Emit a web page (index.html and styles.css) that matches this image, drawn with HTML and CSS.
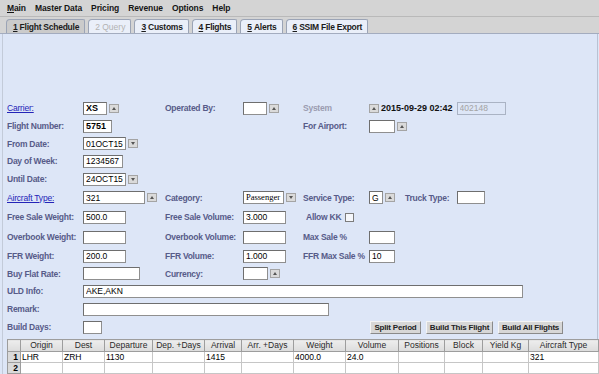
FILE: index.html
```html
<!DOCTYPE html>
<html lang="en">
<head>
<meta charset="UTF-8" />
<title>Flight Schedule</title>
<link rel="stylesheet" href="styles.css">
</head>
<body>

<div class="menubar">
  <span class="menu"><u>M</u>ain</span>
  <span class="menu">Master Data</span>
  <span class="menu">Pricing</span>
  <span class="menu">Revenue</span>
  <span class="menu">Options</span>
  <span class="menu">Help</span>
</div>

<div class="tabstrip">
  <span class="tab active"><u>1</u>&nbsp;Flight Schedule</span>
  <span class="tab disabled">2 Query</span>
  <span class="tab"><u>3</u>&nbsp;Customs</span>
  <span class="tab"><u>4</u>&nbsp;Flights</span>
  <span class="tab"><u>5</u>&nbsp;Alerts</span>
  <span class="tab"><u>6</u>&nbsp;SSIM File Export</span>
</div>

<div class="panel">
  <div class="form">
    <!-- row: carrier -->
    <a class="lbl link c1">Carrier:</a>
    <div class="fld"><input class="in strong w24" value="XS"><span class="arr"></span></div>
    <span class="lbl c3">Operated By:</span>
    <div class="fld"><input class="in w24"><span class="arr"></span></div>
    <span class="lbl muted c5">System</span>
    <div class="fld"><span class="arr"></span><span class="stamp">2015-09-29 02:42</span><input class="in off w49" value="402148" disabled></div>

    <!-- row: flight number -->
    <span class="lbl c1">Flight Number:</span>
    <div class="fld"><input class="in strong w29" value="5751"></div>
    <span class="lbl c5">For Airport:</span>
    <div class="fld"><input class="in w26"><span class="arr"></span></div>

    <span class="lbl c1">From Date:</span>
    <div class="fld"><input class="in w43" value="01OCT15"><span class="arr dn"></span></div>

    <span class="lbl c1">Day of Week:</span>
    <div class="fld"><input class="in w40" value="1234567"></div>

    <span class="lbl c1">Until Date:</span>
    <div class="fld"><input class="in w43" value="24OCT15"><span class="arr dn"></span></div>

    <!-- row: aircraft -->
    <a class="lbl link c1">Aircraft Type:</a>
    <div class="fld"><input class="in w62" value="321"><span class="arr"></span></div>
    <span class="lbl c3">Category:</span>
    <div class="fld"><span class="sel">Passenger</span><span class="arr dn"></span></div>
    <span class="lbl c5">Service Type:</span>
    <div class="fld"><input class="in w14" value="G"><span class="arr"></span><span class="lbl truck">Truck Type:</span><input class="in w28"></div>

    <span class="lbl c1">Free Sale Weight:</span>
    <div class="fld"><input class="in w43" value="500.0"></div>
    <span class="lbl c3">Free Sale Volume:</span>
    <div class="fld"><input class="in w43" value="3.000"></div>
    <div class="fld pair kk"><span class="lbl">Allow KK</span><span class="chk"></span></div>

    <span class="lbl c1">Overbook Weight:</span>
    <div class="fld"><input class="in w43"></div>
    <span class="lbl c3">Overbook Volume:</span>
    <div class="fld"><input class="in w43"></div>
    <span class="lbl c5">Max Sale %</span>
    <div class="fld"><input class="in w26"></div>

    <span class="lbl c1">FFR Weight:</span>
    <div class="fld"><input class="in w43" value="200.0"></div>
    <span class="lbl c3">FFR Volume:</span>
    <div class="fld"><input class="in w43" value="1.000"></div>
    <span class="lbl c5">FFR Max Sale %</span>
    <div class="fld"><input class="in w26" value="10"></div>

    <span class="lbl c1">Buy Flat Rate:</span>
    <div class="fld"><input class="in w57"></div>
    <span class="lbl c3">Currency:</span>
    <div class="fld"><input class="in w25"><span class="arr"></span></div>

    <span class="lbl c1">ULD Info:</span>
    <div class="fld wide"><input class="in w440" value="AKE,AKN"></div>

    <span class="lbl c1">Remark:</span>
    <div class="fld wide"><input class="in w246"></div>

    <span class="lbl c1">Build Days:</span>
    <div class="fld"><input class="in w19"></div>
    <div class="actions c6">
      <button class="btn split">Split Period</button>
      <button class="btn this">Build This Flight</button>
      <button class="btn all">Build All Flights</button>
    </div>
  </div>

  <table class="legs">
    <colgroup>
      <col class="k-rn"><col class="k-42"><col class="k-42"><col class="k-48"><col class="k-52">
      <col class="k-37"><col class="k-52"><col class="k-52"><col class="k-53"><col class="k-46">
      <col class="k-38"><col class="k-46"><col class="k-70">
    </colgroup>
    <thead>
      <tr>
        <th></th><th>Origin</th><th>Dest</th><th>Departure</th><th>Dep. +Days</th><th>Arrival</th><th>Arr. +Days</th>
        <th>Weight</th><th>Volume</th><th>Positions</th><th>Block</th><th>Yield Kg</th><th>Aircraft Type</th>
      </tr>
    </thead>
    <tbody>
      <tr>
        <td class="rn">1</td><td>LHR</td><td>ZRH</td><td>1130</td><td></td><td>1415</td><td></td>
        <td>4000.0</td><td>24.0</td><td></td><td></td><td></td><td>321</td>
      </tr>
      <tr>
        <td class="rn">2</td><td></td><td></td><td></td><td></td><td></td><td></td>
        <td></td><td></td><td></td><td></td><td></td><td></td>
      </tr>
    </tbody>
  </table>
</div>

</body>
</html>
```

FILE: styles.css
```css
html, body {
  margin: 0; padding: 0; height: 100%; overflow: hidden;
}
body {
  font-family: "Liberation Sans", Arial, sans-serif;
  font-size: 8.5px;
  background: #dde6f7;
  color: #000;
}

/* menu bar */
.menubar {
  height: 17px;
  box-sizing: border-box;
  background: #d4d4d4;
  border-bottom: 1px solid #b9b9b9;
  display: flex;
  align-items: center;
  gap: 9px;
  padding-left: 7px;
}
.menu {
  font-weight: bold;
  color: #151515;
  letter-spacing: -0.1px;
}

/* tabs */
.tabstrip {
  height: 17px;
  box-sizing: border-box;
  background: #d4d4d4;
  border-bottom: 1px solid #a3acbf;
  display: flex;
  align-items: flex-end;
  gap: 3px;
  padding-left: 6px;
}
.tab {
  height: 14px;
  box-sizing: border-box;
  display: flex;
  align-items: center;
  padding: 0 5px 0 6px;
  background: #eaeff9;
  border: 1px solid #9ba4b6;
  border-bottom: none;
  border-radius: 4px 2px 0 0;
  font-weight: bold;
  letter-spacing: -0.25px;
  color: #1c1c1c;
  white-space: nowrap;
}
.tab.active {
  background: #cbcbcb;
}
.tab.disabled {
  font-weight: normal;
  color: #b3b3b3;
  letter-spacing: 0;
}

/* main panel */
.panel {
  height: 100%;
  box-sizing: border-box;
  margin: 0 1px 0 2px;
  border-left: 1px solid #c3cbd9;
  border-right: 1px solid #b9c2d3;
  padding: 65px 0 0 4px;
}

.form {
  display: grid;
  grid-template-columns: 76px 82px 78px 60px 66px 1fr;
  grid-template-rows: 18px 18px 17px 18px 18px 19px 20px 20px 18px 17px 18px 18px 18px;
  align-items: center;
}
.c1 { grid-column: 1; }
.c3 { grid-column: 3; }
.c5 { grid-column: 5; }
.c6 { grid-column: 6; }
.wide { grid-column: 2 / -1; }
.pair { grid-column: 5 / -1; }

.lbl {
  font-weight: bold;
  color: #575b89;
  letter-spacing: -0.25px;
  white-space: nowrap;
}
.link {
  font-weight: normal;
  color: #2424b8;
  text-decoration: underline;
  letter-spacing: -0.2px;
  cursor: pointer;
}
.muted {
  color: #9b9cb0;
}

.fld {
  display: flex;
  align-items: center;
  gap: 2px;
}

.in {
  box-sizing: border-box;
  height: 13px;
  margin: 0;
  padding: 0 2px;
  border: 1px solid #8f8f8f;
  border-top-color: #6e6e6e;
  border-left-color: #6e6e6e;
  background: #fff;
  font: 8.5px "Liberation Sans", Arial, sans-serif;
  color: #000;
  outline: none;
}
.in.strong {
  font-weight: bold;
  font-size: 9px;
}
.in.off {
  background: transparent;
  border-color: #aab3c4;
  color: #a4a4a4;
  margin-left: 2px;
}
.w14 { width: 14px; }
.w19 { width: 19px; }
.w24 { width: 24px; }
.w25 { width: 25px; }
.w26 { width: 26px; }
.w28 { width: 28px; }
.w29 { width: 29px; }
.w40 { width: 40px; }
.w43 { width: 43px; }
.w49 { width: 49px; }
.w57 { width: 57px; }
.w62 { width: 62px; }
.w246 { width: 246px; }
.w440 { width: 440px; }

.arr {
  width: 10px;
  height: 9px;
  box-sizing: border-box;
  background: #dadada;
  border: 1px solid #a4a4a4;
  display: flex;
  align-items: center;
  justify-content: center;
}
.arr::after {
  content: "";
  border-left: 2.5px solid transparent;
  border-right: 2.5px solid transparent;
  border-bottom: 3px solid #555;
}
.arr.dn::after {
  border-bottom: 0;
  border-top: 3px solid #555;
}

.stamp {
  font-weight: bold;
  font-size: 9px;
  color: #111;
  white-space: nowrap;
}

.sel {
  box-sizing: border-box;
  width: 41px;
  height: 13px;
  padding: 0 2px;
  border: 1px solid #8f8f8f;
  border-top-color: #6e6e6e;
  border-left-color: #6e6e6e;
  background: #fff;
  font: 8.5px "Liberation Serif", "Times New Roman", serif;
  line-height: 11px;
  overflow: hidden;
  white-space: nowrap;
}

.truck {
  margin: 0 6px 0 8px;
}

.kk {
  padding-left: 3px;
  gap: 4px;
}
.chk {
  width: 7px;
  height: 7px;
  border: 1px solid #7c7c7c;
  background: #f5f7fb;
}

.actions {
  display: flex;
  gap: 5px;
  padding-left: 1px;
}
.btn {
  box-sizing: border-box;
  height: 13px;
  padding: 0;
  margin: 0;
  font: bold 8px "Liberation Sans", Arial, sans-serif;
  letter-spacing: -0.2px;
  color: #222;
  background: #d7d7d7;
  border: 1px solid;
  border-color: #f4f4f4 #8a8a8a #8a8a8a #f4f4f4;
  white-space: nowrap;
}
.btn.split { width: 51px; }
.btn.this { width: 67px; }
.btn.all { width: 65px; }

/* legs grid */
.legs {
  width: 591px;
  margin-top: 3px;
  border-collapse: collapse;
  table-layout: fixed;
  font-size: 8.5px;
}
.k-rn { width: 13px; }
.k-37 { width: 37px; }
.k-38 { width: 38px; }
.k-42 { width: 42px; }
.k-46 { width: 46px; }
.k-48 { width: 48px; }
.k-52 { width: 52px; }
.k-53 { width: 53px; }
.k-70 { width: 70px; }

.legs th {
  height: 11px;
  padding: 0;
  line-height: 11px;
  font-weight: normal;
  color: #2a2a2a;
  background: linear-gradient(#ededed, #dcdcdc);
  border: 1px solid #9d9d9d;
  text-align: center;
  white-space: nowrap;
  overflow: hidden;
}
.legs td {
  height: 10px;
  line-height: 10px;
  padding: 0 1px;
  background: #fff;
  border: 1px solid #c6c6c6;
  white-space: nowrap;
  overflow: hidden;
}
.legs td.rn {
  background: #dadada;
  border-color: #9d9d9d;
  text-align: right;
  font-weight: bold;
  padding-right: 2px;
}
```
